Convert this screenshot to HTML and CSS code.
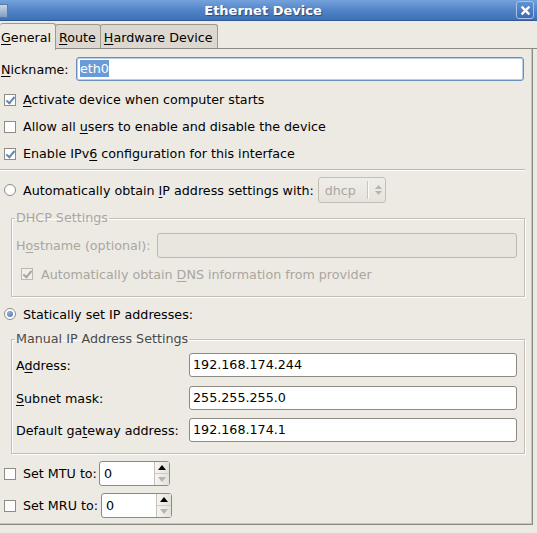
FILE: index.html
```html
<!DOCTYPE html>
<html>
<head>
<meta charset="utf-8">
<link rel="stylesheet" href="styles.css">
</head>
<body>
<div class="window">
  <div class="titlebar">
    <span class="appicon"></span>
    <span class="title">Ethernet Device</span>
    <span class="close"><svg width="17" height="17" viewBox="0 0 17 17"><path d="M5 5 L12 12 M12 5 L5 12" stroke="#fff" stroke-width="2.6" stroke-linecap="square"/></svg></span>
  </div>
  <div class="tabs">
    <div class="tab active"><u>G</u>eneral</div>
    <div class="tab"><u>R</u>oute</div>
    <div class="tab"><u>H</u>ardware Device</div>
    <div class="tabfill"></div>
  </div>
  <div class="panel">
    <div class="row nick">
      <label class="nicklabel"><u>N</u>ickname:</label>
      <div class="entry focus"><span class="sel">eth0</span></div>
    </div>
    <div class="row check"><span class="cb on"></span><span><u>A</u>ctivate device when computer starts</span></div>
    <div class="row check"><span class="cb"></span><span>Allow all <u>u</u>sers to enable and disable the device</span></div>
    <div class="row check"><span class="cb on"></span><span>Enable IPv<u>6</u> configuration for this interface</span></div>
    <div class="sep"></div>
    <div class="row radiorow">
      <span class="rb"></span><span>Automatically obtain <u>I</u>P address settings with:</span>
      <div class="combo"><span class="combotext">dhcp</span><span class="combosep"></span><svg width="9" height="12" viewBox="0 0 9 12"><path d="M4.5 1 L8 5 L1 5 Z M4.5 11 L8 7 L1 7 Z" fill="#b9b5ad"/></svg></div>
    </div>
    <fieldset class="frame dhcp">
      <legend>DHCP Settings</legend>
      <div class="frow host">
        <span class="flabel">H<u>o</u>stname (optional):</span>
        <div class="entry disabled"></div>
      </div>
      <div class="frow dns"><span class="cb on dis"></span><span>Automatically obtain <u>D</u>NS information from provider</span></div>
    </fieldset>
    <div class="row radiorow static"><span class="rb on"></span><span>Statically set IP addresses:</span></div>
    <fieldset class="frame manual">
      <legend>Manual IP Address Settings</legend>
      <div class="frow ip"><span class="iplabel">A<u>d</u>dress:</span><div class="entry">192.168.174.244</div></div>
      <div class="frow ip"><span class="iplabel"><u>S</u>ubnet mask:</span><div class="entry">255.255.255.0</div></div>
      <div class="frow ip"><span class="iplabel">Default ga<u>t</u>eway address:</span><div class="entry">192.168.174.1</div></div>
    </fieldset>
    <div class="row spinrow mtu"><span class="cb"></span><span>Set MTU to:</span>
      <div class="spin"><span class="spintext">0</span><span class="arrows"><span class="up"></span><span class="down"></span></span></div>
    </div>
    <div class="row spinrow mru"><span class="cb"></span><span>Set MRU to:</span>
      <div class="spin"><span class="spintext">0</span><span class="arrows"><span class="up"></span><span class="down"></span></span></div>
    </div>
  </div>
</div>
</body>
</html>
```
FILE: styles.css
```css
html, body {
  margin: 0;
  padding: 0;
}
body {
  width: 537px;
  height: 533px;
  overflow: hidden;
  background: #edeae4;
  font-family: "DejaVu Sans", sans-serif;
  font-size: 12.7px;
  color: #000;
}
u { text-decoration: underline; text-underline-offset: 2px; }
.window { width: 537px; }
.titlebar {
  height: 20px;
  background: linear-gradient(#74a2dc, #4f82c6 55%, #3e70b6);
  border-bottom: 1px solid #2f5a94;
  display: flex;
  align-items: center;
}
.appicon {
  width: 7px;
  height: 12px;
  margin-top: 1px;
  background: linear-gradient(#c9d6e6, #7f9dc0);
  border: 1px solid #5d7aa0;
  border-left: none;
}
.title {
  flex: 1;
  text-align: center;
  color: #fff;
  font-weight: bold;
  font-size: 13px;
  padding-left: 2px;
  padding-top: 1px;
  text-shadow: 1px 1px 1px #27497a;
}
.close {
  width: 16px;
  height: 16px;
  margin-right: 3px;
  border: 1px solid #a8c3e6;
  border-radius: 3px;
  background: linear-gradient(#5f92d4, #3d6cb0);
  display: flex;
  align-items: center;
  justify-content: center;
}
.close svg { width: 15px; height: 15px; }
.tabs {
  height: 28px;
  display: flex;
  align-items: flex-end;
}
.tab {
  height: 25px;
  box-sizing: border-box;
  padding: 5px 4px 0 3px;
  line-height: 16px;
  background: #dcd8cf;
  border: 1px solid #9d998f;
  border-bottom: 1px solid #8d8a84;
  border-radius: 3px 3px 0 0;
  margin-right: -1px;
}
.tab:last-of-type { padding-right: 6px; }
.tab.active {
  height: 27px;
  background: #edeae4;
  border-left: none;
  border-bottom: none;
  padding-left: 1px;
  padding-top: 6px;
  padding-right: 4px;
  position: relative;
  z-index: 1;
  margin-bottom: -1px;
}
.tabfill {
  flex: 1;
  height: 1px;
  background: #8d8a84;
}
.panel {
  height: 476px;
  width: 533px;
  box-sizing: border-box;
  border-right: 1px solid #8d8a84;
  border-bottom: 1px solid #8d8a84;
  box-shadow: inset -1px -1px 0 #c9c5bd;
  padding-top: 8px;
  display: flex;
  flex-direction: column;
}
.row {
  display: flex;
  align-items: center;
}
.nick {
  height: 24px;
  padding-left: 1px;
}
.nicklabel { width: 75px; }
.entry {
  box-sizing: border-box;
  height: 24px;
  background: #fff;
  border: 1px solid #8d8a84;
  border-radius: 3px;
  padding: 0 4px 0 3px;
  line-height: 22px;
  flex: 1;
}
.nick .entry {
  margin-right: 8px;
  border-color: #6b8fbc;
  box-shadow: inset 0 0 0 1px #b7cde8;
}
.sel {
  background: #6b9bd6;
  color: #fff;
  padding: 1px 0;
}
.check {
  height: 27px;
  padding-left: 4px;
}
.nick + .check { margin-top: 5px; }
.cb {
  width: 12px;
  height: 12px;
  box-sizing: border-box;
  border: 1px solid #8f8c86;
  background: #fff;
  margin-right: 7px;
  flex: none;
  position: relative;
}
.cb.on::after {
  content: "";
  position: absolute;
  left: 3px;
  top: 0px;
  width: 3px;
  height: 7px;
  border: solid #6188b8;
  border-width: 0 2px 2px 0;
  transform: rotate(40deg);
}
.cb.dis { border-color: #bcb8b0; background: #f1efea; }
.cb.dis::after { border-color: #a9a59e; }
.sep {
  height: 1px;
  background: #bab6ad;
  border-bottom: 1px solid #fff;
  width: 525px;
  margin-top: 2px;
}
.radiorow {
  height: 26px;
  padding-left: 4px;
  margin-top: 6px;
}
.rb {
  width: 12px;
  height: 12px;
  box-sizing: border-box;
  border: 1px solid #8f8c86;
  border-radius: 50%;
  background: #fff;
  margin-right: 7px;
  flex: none;
  position: relative;
}
.rb.on::after {
  content: "";
  position: absolute;
  left: 2px;
  top: 2px;
  width: 6px;
  height: 6px;
  border-radius: 50%;
  background: radial-gradient(circle at 40% 35%, #8fb3e0, #3d6fb3);
}
.combo {
  margin-left: 4px;
  width: 68px;
  height: 26px;
  box-sizing: border-box;
  border: 1px solid #c3bfb7;
  border-radius: 3px;
  background: linear-gradient(#f0eee9, #e6e3dd);
  display: flex;
  align-items: center;
  color: #aaa69f;
}
.combotext { padding-left: 6px; width: 42px; }
.combosep {
  width: 1px;
  height: 18px;
  background: #c9c5bd;
  border-right: 1px solid #fbfaf8;
  margin-right: 5px;
}
.frame {
  margin: 0 0 0 11px;
  padding: 0;
  width: 514px;
  box-sizing: border-box;
  border: 1px solid #c2beb6;
  box-shadow: inset 1px 1px 0 #fff, 1px 1px 0 #fff;
  border-radius: 0;
}
.frame legend {
  padding: 0 1px;
  margin-left: 3px;
  line-height: 14px;
  color: #4a4a4a;
}
.dhcp { margin-top: 8px; height: 86px; color: #aaa69f; }
.dhcp legend { color: #aaa69f; }
.frow {
  display: flex;
  align-items: center;
  padding-left: 4px;
}
.host { height: 25px; margin-top: 8px; }
.flabel { width: 141px; }
.host .entry {
  margin-right: 7px;
  height: 25px;
  background: #e9e6e0;
  border-color: #bdb9b1;
}
.dns { height: 16px; margin-top: 8px; padding-left: 9px; }
.dns .cb { margin-right: 8px; }
.static { margin-top: 4px; height: 26px; }
.manual { margin-top: 5px; height: 122px; color: #000; }
.manual legend { color: #4a4a4a; }
.ip { height: 24px; margin-bottom: 8px; }
.ip:first-of-type { margin-top: 7px; margin-bottom: 9px; }
.iplabel { width: 173px; }
.ip .entry { margin-right: 7px; }
.spinrow { height: 25px; padding-left: 4px; }
.mtu { margin-top: 7px; }
.mru { margin-top: 7px; }
.spinrow .cb { margin-right: 7px; }
.spin {
  margin-left: 2px;
  width: 71px;
  height: 25px;
  box-sizing: border-box;
  border: 1px solid #8d8a84;
  border-radius: 3px;
  background: #fff;
  display: flex;
}
.mru .spin { margin-left: 3px; }
.spintext { flex: 1; padding-left: 4px; line-height: 23px; }
.arrows {
  width: 14px;
  display: flex;
  flex-direction: column;
  border-left: 1px solid #c5c1b9;
  background: linear-gradient(90deg, #f6f5f2, #e4e1db);
}
.up, .down {
  flex: 1;
  display: flex;
  align-items: center;
  justify-content: center;
}
.up { border-bottom: 1px solid #cfcbc3; }
.up::before {
  content: "";
  border-left: 4px solid transparent;
  border-right: 4px solid transparent;
  border-bottom: 5px solid #000;
}
.down::before {
  content: "";
  border-left: 4px solid transparent;
  border-right: 4px solid transparent;
  border-top: 5px solid #b8b4ac;
}
```
